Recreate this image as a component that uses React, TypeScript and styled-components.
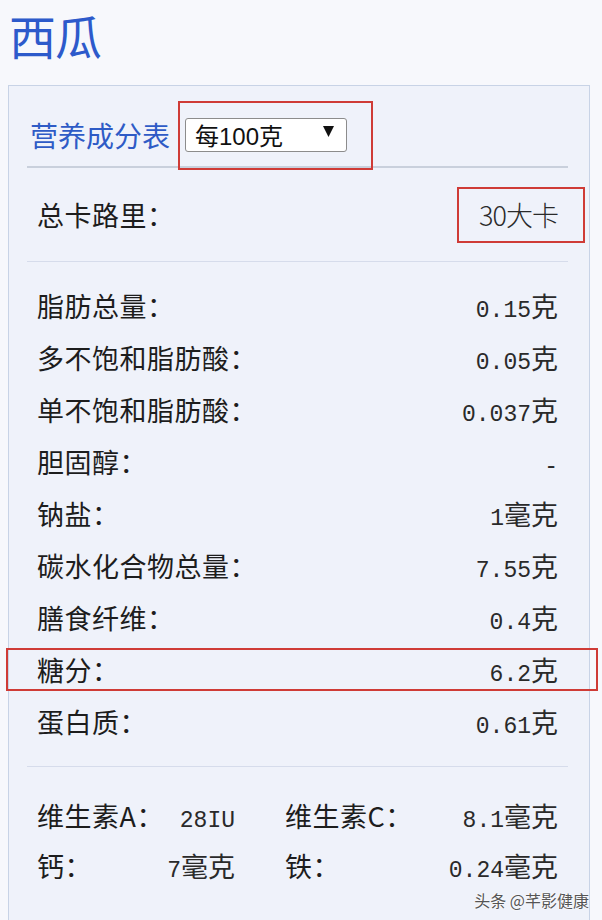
import { createGlobalStyle } from "styled-components";
import styled from "styled-components";

const CJK = `"Noto Sans CJK SC", "Noto Sans", sans-serif`;

const GlobalStyle = createGlobalStyle`
  html, body {
    margin: 0;
    padding: 0;
    background: #f7f8fc;
    font-family: ${CJK};
  }
`;

const Page = styled.div`
  position: relative;
  height: 920px;
  overflow: hidden;
  padding: 0 12px 0 8px;
`;

const Title = styled.h1`
  margin: 0;
  padding: 7px 0 0 1px;
  height: 85px;
  box-sizing: border-box;
  font-size: 47px;
  font-weight: 400;
  line-height: 56px;
  color: #2d5acb;
  letter-spacing: -1px;
`;

const Panel = styled.div`
  border: 1px solid #c8d3e6;
  border-bottom: none;
  background: #eff2fa;
  padding: 0 21px 60px 18px;
`;

const Header = styled.div`
  display: flex;
  align-items: center;
  height: 82px;
  box-sizing: border-box;
  padding: 16px 3px 0;
  border-bottom: 2px solid #c9d0dc;
`;

const HeaderTitle = styled.span`
  font-size: 28px;
  color: #2e5bc6;
  margin-top: 2px;
`;

const Marked = styled.div`
  position: relative;
`;

const RedBox = styled.div<{ $t: number; $r: number; $b: number; $l: number }>`
  position: absolute;
  top: ${(p) => p.$t}px;
  right: ${(p) => p.$r}px;
  bottom: ${(p) => p.$b}px;
  left: ${(p) => p.$l}px;
  border: 2px solid #cf3b36;
  pointer-events: none;
`;

const SelectBox = styled.div`
  margin-left: 15px;
  margin-top: 1px;
  width: 162px;
  height: 34px;
  box-sizing: border-box;
  display: flex;
  align-items: center;
  justify-content: space-between;
  padding: 0 12px 0 9px;
  background: #fff;
  border: 1px solid #8c8c8c;
  border-radius: 3px;
  font-family: "Liberation Sans", ${CJK};
  font-size: 24px;
  color: #111;
`;

const Caret = styled.svg`
  width: 11px;
  height: 11px;
  margin-top: -6px;
`;

const Section = styled.div<{ $pt: number; $pb: number; $line?: boolean }>`
  padding: ${(p) => p.$pt}px 10px ${(p) => p.$pb}px;
  border-bottom: ${(p) => (p.$line ? "1px solid #d6dceb" : "none")};
`;

const Row = styled.div<{ $h?: number }>`
  position: relative;
  display: flex;
  align-items: center;
  justify-content: space-between;
  height: ${(p) => p.$h ?? 52}px;
`;

const Label = styled.span`
  font-size: 27px;
  color: #1d1d1d;
  letter-spacing: 0.5px;
`;

const Value = styled.span`
  font-size: 27px;
  color: #2a2a2a;
  white-space: nowrap;
`;

const Num = styled.span`
  font-family: "Liberation Mono", monospace;
  font-size: 23px;
`;

const Kcal = styled.span`
  font-size: 27px;
  font-weight: 300;
  color: #2a2a2a;
  letter-spacing: -1px;
`;

const VitGrid = styled.div`
  display: grid;
  grid-template-columns: 198px 273px;
  column-gap: 50px;
`;

const Watermark = styled.div`
  position: absolute;
  right: 13px;
  bottom: 8px;
  font-size: 16px;
  color: #555;
  text-shadow: 0 0 2px #fff, 0 0 2px #fff;
`;

type Item = { label: string; num: string; unit: string; marked?: boolean };

const ITEMS: Item[] = [
  { label: "脂肪总量：", num: "0.15", unit: "克" },
  { label: "多不饱和脂肪酸：", num: "0.05", unit: "克" },
  { label: "单不饱和脂肪酸：", num: "0.037", unit: "克" },
  { label: "胆固醇：", num: "-", unit: "" },
  { label: "钠盐：", num: "1", unit: "毫克" },
  { label: "碳水化合物总量：", num: "7.55", unit: "克" },
  { label: "膳食纤维：", num: "0.4", unit: "克" },
  { label: "糖分：", num: "6.2", unit: "克", marked: true },
  { label: "蛋白质：", num: "0.61", unit: "克" },
];

const VITAMINS: Item[] = [
  { label: "维生素A：", num: "28IU", unit: "" },
  { label: "维生素C：", num: "8.1", unit: "毫克" },
  { label: "钙：", num: "7", unit: "毫克" },
  { label: "铁：", num: "0.24", unit: "毫克" },
];

function Amount({ num, unit }: { num: string; unit: string }) {
  return (
    <Value>
      <Num>{num}</Num>
      {unit}
    </Value>
  );
}

export default function App() {
  return (
    <Page>
      <GlobalStyle />
      <Title>西瓜</Title>
      <Panel>
        <Header>
          <HeaderTitle>营养成分表</HeaderTitle>
          <Marked>
            <SelectBox>
              <span>每100克</span>
              <Caret viewBox="0 0 11 11">
                <polygon points="0,0 11,0 5.5,11" fill="#111" />
              </Caret>
            </SelectBox>
            <RedBox $t={-16} $r={-26} $b={-18} $l={8} />
          </Marked>
        </Header>

        <Section $pt={0} $pb={0} $line>
          <Row $h={93}>
            <Label>总卡路里：</Label>
            <Marked>
              <Kcal>30大卡</Kcal>
              <RedBox $t={-8} $r={-27} $b={-9} $l={-22} />
            </Marked>
          </Row>
        </Section>

        <Section $pt={17} $pb={19} $line>
          {ITEMS.map((it) => (
            <Row key={it.label}>
              <Label>{it.label}</Label>
              <Amount num={it.num} unit={it.unit} />
              {it.marked && <RedBox $t={5} $r={-40} $b={4} $l={-31} />}
            </Row>
          ))}
        </Section>

        <Section $pt={23} $pb={0}>
          <VitGrid>
            {VITAMINS.map((it) => (
              <Row key={it.label} $h={50}>
                <Label>{it.label}</Label>
                <Amount num={it.num} unit={it.unit} />
              </Row>
            ))}
          </VitGrid>
        </Section>
      </Panel>
      <Watermark>头条 @芊影健康</Watermark>
    </Page>
  );
}
